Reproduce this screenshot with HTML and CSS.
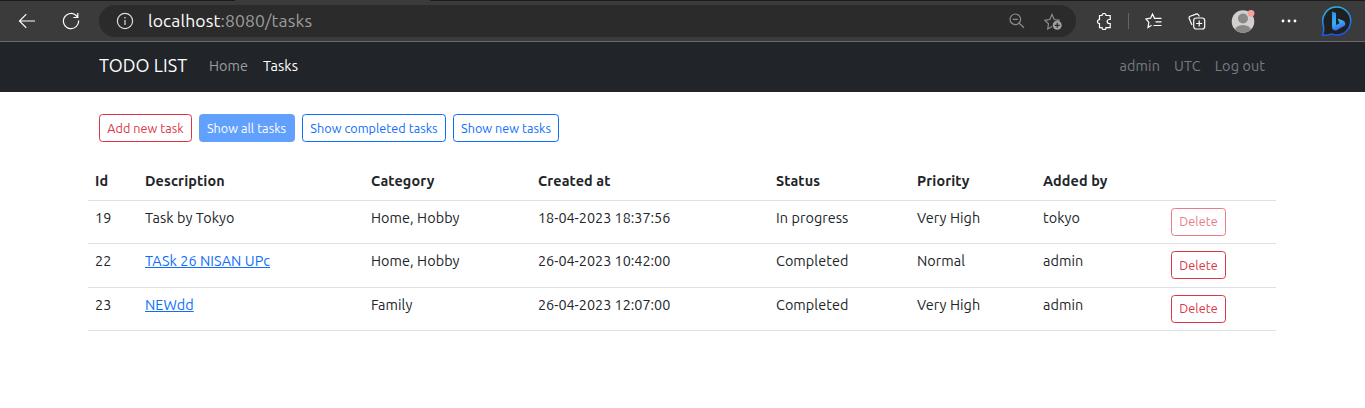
FILE: index.html
```html
<!DOCTYPE html>
<html lang="en">
<head>
<meta charset="utf-8">
<title>Tasks</title>
<link rel="stylesheet" href="styles.css">
</head>
<body>
<div class="browser">
  <div class="tabstrip"><span class="tab"></span></div>
  <div class="toolbar">
    <svg class="icon back" width="18" height="16" viewBox="0 0 18 16"><path d="M17 8H1.500M8.300 1.200 1.500 8l6.800 6.800"/></svg>
    <svg class="icon reload" width="18" height="18" viewBox="0 0 18 18"><path d="M16.600 8.500A7.600 7.600 0 1 1 13.600 3L15.600 5M15.800 1v4.500h-4.500"/></svg>
    <div class="address">
      <svg class="icon info" width="18" height="18" viewBox="0 0 18 18"><circle cx="9" cy="9" r="7.600"/><path d="M9 8v5M9 5v1.400"/></svg>
      <span class="url"><span class="host">localhost</span>:8080/tasks</span>
      <svg class="icon dim zoomout" width="16" height="16" viewBox="0 0 16 16"><circle cx="6.300" cy="6.300" r="5.300"/><path d="m10.200 10.200 4.800 4.600M3.800 6.300h5"/></svg>
      <svg class="icon dim addfav" width="18" height="17" viewBox="0 0 18 17"><path d="M8 13.500 3.700 16l.8-5.200L1 7.300l4.800-.8L8 1.500l2.300 5 4.800.8-.6.8"/><circle class="badge" cx="13.200" cy="12.300" r="4.500"/><path class="cut" d="M13.200 9.800v5M10.700 12.300h5"/></svg>
    </div>
    <svg class="icon puzzle" width="16" height="17" viewBox="0 0 16 17"><path d="M3.500 2.500H6a2 2 0 0 1 4 0h4.200v4h-1a2 2 0 0 0 0 4h1v4.200H10a2 2 0 0 1-4 0H3.500v-4a2 2 0 0 1 0-4z"/></svg>
    <span class="divider"></span>
    <svg class="icon favs" width="18" height="16" viewBox="0 0 18 16"><path d="M6.500 12.300 3 14.600l.8-5.200L1 6l4.600-.8L7.500 1l2 4.300h7M10.500 8.800h6M8.500 12.500h8"/></svg>
    <svg class="icon coll" width="18" height="17" viewBox="0 0 18 17"><path d="M4 12 1.200 5.500q-.5-1.700 1-2.300L8 1.100q1.500-.5 2.400.7l1 1.700"/><rect x="5.700" y="5" width="11" height="11" rx="2.500"/><path d="M11.200 7.500v6M8.200 10.500h6"/></svg>
    <svg class="avatar" width="24" height="24" viewBox="0 0 24 24"><defs><clipPath id="face"><circle cx="12" cy="12.500" r="11.300"/></clipPath></defs><circle cx="12" cy="12.500" r="11.300" fill="#d2d0ce"/><g clip-path="url(#face)" fill="#8a8886"><circle cx="12" cy="9.500" r="5"/><ellipse cx="12" cy="21.500" rx="8" ry="5.500"/></g><circle cx="20" cy="4.300" r="3.400" fill="#f7a19b"/></svg>
    <svg class="more" width="16" height="4" viewBox="0 0 16 4"><circle cx="2" cy="2" r="1.400"/><circle cx="8" cy="2" r="1.400"/><circle cx="14" cy="2" r="1.400"/></svg>
    <svg class="bing" width="32" height="32" viewBox="0 0 32 32"><defs><linearGradient id="ring" x1=".3" y1="0" x2=".5" y2="1"><stop offset="0" stop-color="#27b7e0"/><stop offset="1" stop-color="#1d50e0"/></linearGradient><linearGradient id="bee" x1="0" y1="0" x2=".3" y2="1"><stop offset="0" stop-color="#2a8cf0"/><stop offset=".6" stop-color="#32b5f5"/><stop offset="1" stop-color="#3b70ef"/></linearGradient></defs><path d="M1.500 30.300Q3.300 27 2.300 20A14 14 0 1 1 10.500 29Q6 30.800 1.500 30.300z" fill="#1f1f1f" stroke="url(#ring)" stroke-width="1.600" stroke-linejoin="round"/><path d="M11 6.500 15 8v12l3.500-1.800-2-4.600 5.500 2q3.200 1.500 2 5L15 25.500q-4-.2-4-3.500z" fill="url(#bee)"/></svg>
  </div>
</div>
<nav class="navbar">
  <a class="brand">TODO LIST</a>
  <a class="navlink home">Home</a>
  <a class="navlink active">Tasks</a>
  <div class="user"><span class="u-admin">admin</span><span class="u-tz">UTC</span><span class="u-out">Log out</span></div>
</nav>
<main class="page">
  <div class="actions">
    <button class="btn danger add">Add new task</button>
    <button class="btn filled all">Show all tasks</button>
    <button class="btn primary completed">Show completed tasks</button>
    <button class="btn primary new">Show new tasks</button>
  </div>
  <table class="tasks">
    <colgroup><col class="c1"><col class="c2"><col class="c3"><col class="c4"><col class="c5"><col class="c6"><col class="c7"><col class="c8"></colgroup>
    <thead><tr><th>Id</th><th>Description</th><th>Category</th><th>Created at</th><th>Status</th><th>Priority</th><th>Added by</th><th></th></tr></thead>
    <tbody>
      <tr class="r43"><td>19</td><td>Task by Tokyo</td><td>Home, Hobby</td><td class="date">18-04-2023 18:37:56</td><td>In progress</td><td>Very High</td><td>tokyo</td><td><button class="btn danger del disabled">Delete</button></td></tr>
      <tr class="r44"><td>22</td><td><a class="link">TASk 26 NISAN UPc</a></td><td>Home, Hobby</td><td class="date">26-04-2023 10:42:00</td><td>Completed</td><td>Normal</td><td>admin</td><td><button class="btn danger del">Delete</button></td></tr>
      <tr class="r43"><td>23</td><td><a class="link">NEWdd</a></td><td>Family</td><td class="date">26-04-2023 12:07:00</td><td>Completed</td><td>Very High</td><td>admin</td><td><button class="btn danger del">Delete</button></td></tr>
    </tbody>
  </table>
</main>
</body>
</html>
```
FILE: styles.css
```css
* { box-sizing: border-box; }
body { margin: 0; background: #fff; color: #212529; font: 14.4px/21.6px Ubuntu, "Noto Sans", sans-serif; letter-spacing: .07px; height: 408px; overflow: hidden; }
.browser { height: 42px; background: #3b3b3b; border-bottom: 1px solid #6b6b6b; }
.tabstrip { height: 1px; background: #1b1b1b; padding-left: 235px; display: flex; }
.tab { width: 195px; height: 1px; background: #3b3b3b; }
.toolbar { height: 40px; display: flex; align-items: center; padding-left: 18px; }
.icon { fill: none; stroke: #fff; stroke-width: 1.2; flex: none; }
.dim { stroke: #8c8c8c; }
.badge { fill: #a0a0a0; stroke: none; }
.cut { stroke: #2b2b2b; }
.reload { margin-left: 26px; }
.address { margin-left: 19px; width: 977px; height: 32px; border-radius: 16px; background: #2b2b2b; display: flex; align-items: center; padding: 0 14px 0 17px; }
.info { stroke: #ddd; }
.url { margin-left: 14px; font-size: 17.6px; letter-spacing: .1px; color: #9b9b9b; flex: 1; white-space: nowrap; }
.host { color: #fff; }
.addfav { margin-left: 19px; }
.puzzle { margin-left: 20px; }
.divider { width: 1px; height: 16px; background: #666; margin-left: 16px; }
.favs { margin-left: 16px; }
.coll { margin-left: 25px; }
.avatar { margin-left: 25px; }
.more { margin-left: 26px; fill: #fff; }
.bing { margin-left: 24px; }
.navbar { height: 50px; background: #212529; display: flex; align-items: center; padding: 0 100px 1px 99px; color: #fff; }
.brand { font-size: 18px; width: 110px; white-space: nowrap; padding-bottom: 1px; }
.navlink { width: 54px; }
.home { color: #9b9d9f; }
.user { margin-left: auto; display: flex; gap: 14px; color: #747d85; letter-spacing: .1px; }
.page { padding: 22px 89px 0 88px; }
.actions { display: flex; gap: 7px; padding-left: 11px; }
.btn { height: 28px; font: 12.6px/19px Ubuntu, "Noto Sans", sans-serif; letter-spacing: .05px; border: 1px solid; border-radius: 3.6px; background: #fff; padding: 0; text-align: center; white-space: nowrap; display: block; }
.danger { color: #dc3545; }
.primary { color: #0d6efd; }
.filled { color: #fff; background: #62a0fe; border-color: #62a0fe; }
.add { width: 93px; }
.all { width: 96px; padding-right: 1px; }
.completed { width: 144px; }
.new { width: 106px; }
.del { width: 55px; }
.r43 .del { padding-bottom: 2px; }
.disabled { opacity: .65; }
.tasks { width: 1188px; margin-top: 21px; table-layout: fixed; border-collapse: separate; border-spacing: 0; }
.tasks th, .tasks td { text-align: left; vertical-align: top; padding: 7px 0 0 7px; border-bottom: 1px solid #dee2e6; white-space: nowrap; }
.tasks th { padding-top: 8px; letter-spacing: .12px; }
.tasks .date { letter-spacing: 0; }
.tasks thead tr { height: 38px; }
.r43 { height: 43px; }
.r44 { height: 44px; }
.link { color: #0d6efd; text-decoration: underline; }
.c1 { width: 50px; }
.c2 { width: 226px; }
.c3 { width: 167px; }
.c4 { width: 238px; }
.c5 { width: 141px; }
.c6 { width: 126px; }
.c7 { width: 128px; }
.c8 { width: 112px; }
```
